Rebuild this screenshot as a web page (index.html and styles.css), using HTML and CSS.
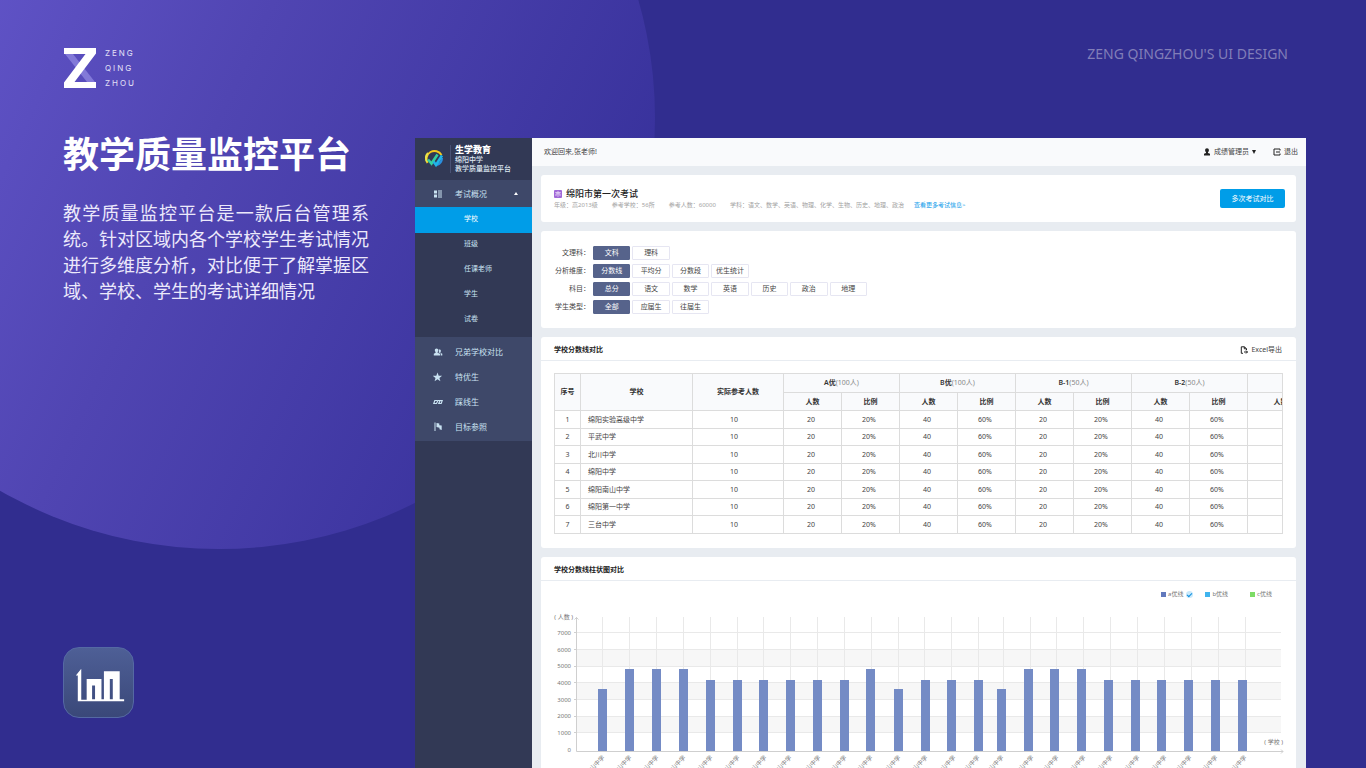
FILE: index.html
```html
<!DOCTYPE html>
<html lang="zh-CN">
<head>
<meta charset="utf-8">
<meta name="viewport" content="width=device-width, initial-scale=1">
<title>教学质量监控平台</title>
<link rel="stylesheet" href="styles.css">
</head>
<body>
<div class="stage">
  <section class="intro">
    <div class="brand">
      <svg class="brand-mark" viewBox="0 0 33 40" aria-hidden="true">
        <path fill="#8279d8" d="M2 6h8l22 28h-8z"/>
        <path fill="#fff" d="M1 0h32v5.500L11.500 34H33v6H1v-5.500L22.500 6H1z"/>
      </svg>
      <div class="brand-name"><span>ZENG</span><span>QING</span><span>ZHOU</span></div>
    </div>
    <h1 class="intro-title">教学质量监控平台</h1>
    <p class="intro-text">教学质量监控平台是一款后台管理系统。针对区域内各个学校学生考试情况进行多维度分析，对比便于了解掌握区域、学校、学生的考试详细情况</p>
    <div class="app-icon">
      <svg viewBox="0 0 70 70" aria-hidden="true">
        <path fill="#fff" fill-rule="evenodd" d="M12 28l5.500-7v31.500H23V31.500h15V52h2.500V23.500h16V52H61v2H14V28zM28.500 38v14h3V38zM46.500 31.500V52h3V31.500z"/>
      </svg>
    </div>
  </section>

  <div class="showcase">
    <p class="credit">ZENG QINGZHOU'S UI DESIGN</p>
    <div class="app">
      <aside class="sidebar">
        <div class="logo">
          <svg class="logo-mark" viewBox="0 0 22 22" aria-hidden="true">
            <path d="M4.500 16A8 8 0 1 1 18.500 8" fill="none" stroke="#f5c81e" stroke-width="2"/>
            <path d="M4 15A8 8 0 0 1 5 6" fill="none" stroke="#e8e34a" stroke-width="2"/>
            <path d="M19 11a8 8 0 0 1-5 7" fill="none" stroke="#2a8fe0" stroke-width="2.200"/>
            <path d="M5 12.500l3.500 4 6-9" fill="none" stroke="#35d0a0" stroke-width="2.600"/>
            <path d="M10.500 14.500l2.500 3.500 6-9.500" fill="none" stroke="#1fb4e8" stroke-width="2.600"/>
          </svg>
          <div class="logo-text">
            <strong>生学教育</strong>
            <span>绵阳中学</span>
            <span>教学质量监控平台</span>
          </div>
        </div>
        <nav class="menu" aria-label="主菜单">
          <a class="menu-item menu-open" href="#">
            <svg viewBox="0 0 10 10" aria-hidden="true"><path fill="currentColor" d="M1 1.500h3v3H1zM1 5.500h3v3H1zM5 1.500h4v1H5zM5 3.500h4v1H5zM5 5.500h4v1H5zM5 7.500h4v1H5z"/></svg>
            <span>考试概况</span><i class="caret-up"></i>
          </a>
          <div class="submenu">
            <a class="submenu-item is-active" href="#">学校</a>
            <a class="submenu-item" href="#">班级</a>
            <a class="submenu-item" href="#">任课老师</a>
            <a class="submenu-item" href="#">学生</a>
            <a class="submenu-item" href="#">试卷</a>
          </div>
          <div class="menu-group">
            <a class="menu-item" href="#">
              <svg viewBox="0 0 10 10" aria-hidden="true"><path fill="currentColor" d="M3.500 1.500c1.200 0 1.800.8 1.800 1.800 0 .8-.3 1.300-.7 1.700v.7L7 6.700v1.800H.8V6.700l1.800-1V5c-.5-.4-.8-.9-.8-1.700 0-1 .6-1.800 1.700-1.800zM6.500 2.500c.9 0 1.400.6 1.400 1.400 0 .6-.2 1-.6 1.300v.6l2 .9v1.800H7.700V6.300L5.600 5.400c.2-.5.4-1 .3-1.700 0-.6-.1-.9-.3-1 .2-.1.500-.2.9-.2z"/></svg>
              <span>兄弟学校对比</span>
            </a>
            <a class="menu-item" href="#">
              <svg viewBox="0 0 10 10" aria-hidden="true"><path fill="currentColor" d="M4.500 .5l1.200 3.200 3.400.1-2.700 2.100 1 3.300-2.900-1.900-2.900 1.900.9-3.300L-.1 3.800l3.400-.1z"/></svg>
              <span>特优生</span>
            </a>
            <a class="menu-item" href="#">
              <svg viewBox="0 0 10 10" aria-hidden="true"><path fill="none" stroke="currentColor" stroke-width="1.200" d="M4.200 3.500H1.800L.8 6.500h2.700l1.400-3h2.200L5.800 6.500h2.400l1-3H6.600"/></svg>
              <span>踩线生</span>
            </a>
            <a class="menu-item" href="#">
              <svg viewBox="0 0 10 10" aria-hidden="true"><path fill="currentColor" d="M1.500 .5h1v8.500h-1zM3.500 1l2.800.6v1.600L8.700 3.500v4.500L6.500 7.200V5.700l-3-.6z"/></svg>
              <span>目标参照</span>
            </a>
          </div>
        </nav>
      </aside>

      <div class="main">
        <header class="topbar">
          <span>欢迎回来,张老师!</span>
          <div class="topbar-actions">
            <button class="plain" type="button">
              <svg viewBox="0 0 8 8" aria-hidden="true"><path fill="currentColor" d="M4 .3c1.300 0 1.900.8 1.900 1.900S5.300 4 5 4.300v.8l2 .7v1.700H1V5.800l2-.7v-.8C2.700 4 2.100 3.300 2.100 2.200S2.700.3 4 .3z"/></svg>
              <span>成绩管理员</span><i class="caret-down"></i>
            </button>
            <button class="plain" type="button">
              <svg viewBox="0 0 8 8" aria-hidden="true"><path fill="none" stroke="currentColor" d="M7 2.500V1H1v6h6V5.500M3 4h4"/></svg>
              <span>退出</span>
            </button>
          </div>
        </header>

        <main class="content">
          <section class="card exam">
            <div class="exam-info">
              <h2 class="exam-title">
                <svg viewBox="0 0 8 8" aria-hidden="true"><rect width="8" height="8" rx="1" fill="#a169d8"/><path fill="none" stroke="#ead9f8" stroke-width=".8" d="M4 1v1.200M1.300 2.500h5.400M2 6V3.800h4V6M4 2.500v4.300"/></svg>
                绵阳市第一次考试
              </h2>
              <p class="exam-meta">
                <span>年级<b class="colon">：</b>高2013级</span><span>参考学校<b class="colon">：</b>56所</span><span>参考人数<b class="colon">：</b>60000</span><span>学科<b class="colon">：</b>语文、数学、英语、物理、化学、生物、历史、地理、政治</span><a href="#">查看更多考试信息&gt;</a>
              </p>
            </div>
            <button class="primary" type="button">多次考试对比</button>
          </section>

          <section class="card filters">
            <div class="filter"><span class="filter-label">文理科<b class="colon">：</b></span><div class="chips"><button type="button" class="chip on">文科</button><button type="button" class="chip">理科</button></div></div>
            <div class="filter"><span class="filter-label">分析维度<b class="colon">：</b></span><div class="chips"><button type="button" class="chip on">分数线</button><button type="button" class="chip">平均分</button><button type="button" class="chip">分数段</button><button type="button" class="chip">优生统计</button></div></div>
            <div class="filter"><span class="filter-label">科目<b class="colon">：</b></span><div class="chips"><button type="button" class="chip on">总分</button><button type="button" class="chip">语文</button><button type="button" class="chip">数学</button><button type="button" class="chip">英语</button><button type="button" class="chip">历史</button><button type="button" class="chip">政治</button><button type="button" class="chip">地理</button></div></div>
            <div class="filter"><span class="filter-label">学生类型<b class="colon">：</b></span><div class="chips"><button type="button" class="chip on">全部</button><button type="button" class="chip">应届生</button><button type="button" class="chip">往届生</button></div></div>
          </section>

          <section class="card">
            <div class="card-head">
              <h3>学校分数线对比</h3>
              <button class="plain" type="button">
                <svg viewBox="0 0 8 8" aria-hidden="true"><path fill="none" stroke="currentColor" d="M3 7.300H1.300V.8H4.500L6.500 2.800V4M4.300.8v2h2M4 6h3.500M6 4.500L7.500 6 6 7.500"/></svg>
                <span>Excel导出</span>
              </button>
            </div>
            <div class="table-wrap">
              <table class="scores">
                <colgroup><col class="c-no"><col class="c-school"><col class="c-total"><col span="8" class="c-num"><col class="c-last"></colgroup>
                <thead>
                  <tr class="r-top"><th rowspan="2">序号</th><th rowspan="2">学校</th><th rowspan="2">实际参考人数</th><th colspan="2">A优<small>(100人)</small></th><th colspan="2">B优<small>(100人)</small></th><th colspan="2">B-1<small>(50人)</small></th><th colspan="2">B-2<small>(50人)</small></th><th></th></tr>
                  <tr class="r-sub"><th>人数</th><th>比例</th><th>人数</th><th>比例</th><th>人数</th><th>比例</th><th>人数</th><th>比例</th><th>人数</th></tr>
                </thead>
                <tbody>
                  <tr><td>1</td><td>绵阳实验高级中学</td><td>10</td><td>20</td><td>20%</td><td>40</td><td>60%</td><td>20</td><td>20%</td><td>40</td><td>60%</td><td></td></tr>
                  <tr><td>2</td><td>平武中学</td><td>10</td><td>20</td><td>20%</td><td>40</td><td>60%</td><td>20</td><td>20%</td><td>40</td><td>60%</td><td></td></tr>
                  <tr><td>3</td><td>北川中学</td><td>10</td><td>20</td><td>20%</td><td>40</td><td>60%</td><td>20</td><td>20%</td><td>40</td><td>60%</td><td></td></tr>
                  <tr><td>4</td><td>绵阳中学</td><td>10</td><td>20</td><td>20%</td><td>40</td><td>60%</td><td>20</td><td>20%</td><td>40</td><td>60%</td><td></td></tr>
                  <tr><td>5</td><td>绵阳南山中学</td><td>10</td><td>20</td><td>20%</td><td>40</td><td>60%</td><td>20</td><td>20%</td><td>40</td><td>60%</td><td></td></tr>
                  <tr><td>6</td><td>绵阳第一中学</td><td>10</td><td>20</td><td>20%</td><td>40</td><td>60%</td><td>20</td><td>20%</td><td>40</td><td>60%</td><td></td></tr>
                  <tr><td>7</td><td>三台中学</td><td>10</td><td>20</td><td>20%</td><td>40</td><td>60%</td><td>20</td><td>20%</td><td>40</td><td>60%</td><td></td></tr>
                </tbody>
              </table>
            </div>
          </section>

          <section class="card">
            <div class="card-head"><h3>学校分数线柱状图对比</h3></div>
            <div class="legend">
              <label><i class="swatch a"></i>a优线<input type="checkbox" checked></label>
              <label><i class="swatch b"></i>b优线<input type="checkbox"></label>
              <label><i class="swatch c"></i>c优线<input type="checkbox"></label>
            </div>
            <svg class="chart" viewBox="0 0 755 190" role="img" aria-label="学校分数线柱状图">
              <path class="band" d="M36 43.500h704v17H36zM36 76.500h704v17H36zM36 110.500h704v16H36z"/>
              <path class="grid" d="M36 26.500h704M36 43.500h704M36 60.500h704M36 76.500h704M36 93.500h704M36 110.500h704M36 126.500h704"/>
              <path class="grid" d="M61.500 11v134M88.500 11v134M115.500 11v134M142.500 11v134M169.500 11v134M196.500 11v134M222.500 11v134M249.500 11v134M276.500 11v134M303.500 11v134M330.500 11v134M357.500 11v134M383.500 11v134M410.500 11v134M437.500 11v134M462.500 11v134M489.500 11v134M515.500 11v134M542.500 11v134M569.500 11v134M596.500 11v134M623.500 11v134M650.500 11v134M677.500 11v134M704.500 11v134"/>
              <path class="axis" d="M35.500 11v134.500H742M33.500 13.500l2-2 2 2M740 143.500l2 2-2 2M33 26.500h2M33 43.500h2M33 60.500h2M33 76.500h2M33 93.500h2M33 110.500h2M33 126.500h2"/>
              <path class="bars" d="M57 145v-62h9v62zM84 145v-82h9v82zM111 145v-82h9v82zM138 145v-82h9v82zM165 145v-71h9v71zM192 145v-71h9v71zM218 145v-71h9v71zM245 145v-71h9v71zM272 145v-71h9v71zM299 145v-71h9v71zM325 145v-82h9v82zM353 145v-62h9v62zM380 145v-71h9v71zM406 145v-71h9v71zM433 145v-71h9v71zM456 145v-62h9v62zM483 145v-82h9v82zM509 145v-82h9v82zM536 145v-82h9v82zM563 145v-71h9v71zM590 145v-71h9v71zM616 145v-71h9v71zM643 145v-71h9v71zM670 145v-71h9v71zM697 145v-71h9v71z"/>
              <g class="tick">
                <text x="32" y="13">( 人数 )</text>
                <text x="30" y="29">7000</text><text x="30" y="46">6000</text><text x="30" y="62">5000</text><text x="30" y="79">4000</text><text x="30" y="96">3000</text><text x="30" y="112">2000</text><text x="30" y="129">1000</text><text x="30" y="146">0</text>
                <text x="742" y="138">( 学校 )</text>
                <text transform="translate(64 152) rotate(-45)">绵阳南山中学</text>
                <text transform="translate(91 152) rotate(-45)">绵阳南山中学</text>
                <text transform="translate(118 152) rotate(-45)">绵阳南山中学</text>
                <text transform="translate(145 152) rotate(-45)">绵阳南山中学</text>
                <text transform="translate(172 152) rotate(-45)">绵阳南山中学</text>
                <text transform="translate(199 152) rotate(-45)">绵阳南山中学</text>
                <text transform="translate(226 152) rotate(-45)">绵阳南山中学</text>
                <text transform="translate(251 152) rotate(-45)">绵阳南山中学</text>
                <text transform="translate(280 152) rotate(-45)">绵阳南山中学</text>
                <text transform="translate(306 152) rotate(-45)">绵阳南山中学</text>
                <text transform="translate(332 152) rotate(-45)">绵阳南山中学</text>
                <text transform="translate(360 152) rotate(-45)">绵阳南山中学</text>
                <text transform="translate(387 152) rotate(-45)">绵阳南山中学</text>
                <text transform="translate(415 152) rotate(-45)">绵阳南山中学</text>
                <text transform="translate(439 152) rotate(-45)">绵阳南山中学</text>
                <text transform="translate(463 152) rotate(-45)">绵阳南山中学</text>
                <text transform="translate(493 152) rotate(-45)">绵阳南山中学</text>
                <text transform="translate(518 152) rotate(-45)">绵阳南山中学</text>
                <text transform="translate(545 152) rotate(-45)">绵阳南山中学</text>
                <text transform="translate(572 152) rotate(-45)">绵阳南山中学</text>
                <text transform="translate(599 152) rotate(-45)">绵阳南山中学</text>
                <text transform="translate(626 152) rotate(-45)">绵阳南山中学</text>
                <text transform="translate(651 152) rotate(-45)">绵阳南山中学</text>
                <text transform="translate(677 152) rotate(-45)">绵阳南山中学</text>
                <text transform="translate(706 152) rotate(-45)">绵阳南山中学</text>
              </g>
            </svg>
          </section>
        </main>
      </div>
    </div>
  </div>
</div>
</body>
</html>
```
FILE: styles.css
```css
* { box-sizing: border-box; }

body {
  margin: 0;
  font-family: "Noto Sans", "Noto Sans CJK SC", sans-serif;
  font-size: 7px;
  line-height: 10px;
  color: #444;
}

h1, h2, h3, p { margin: 0; }
a { color: inherit; text-decoration: none; }
button { font: inherit; color: inherit; padding: 0; border: 0; background: none; cursor: pointer; }
svg { display: block; flex: none; }

.stage {
  position: relative;
  display: grid;
  grid-template-columns: 415px minmax(0, 1fr);
  grid-template-rows: 100vh;
  height: 100vh;
  padding-right: 60px;
  overflow: hidden;
  background: #312d8f;
}

/* large gradient disc behind the headline */
.stage::before {
  content: "";
  position: absolute;
  left: -217px;
  top: -313px;
  width: 872px;
  height: 862px;
  border-radius: 50%;
  background: linear-gradient(115deg, #6457cc 20%, #5045b2 50%, #36309a 90%);
}

.intro, .showcase { position: relative; }

.intro {
  display: flex;
  flex-direction: column;
  padding: 48px 46px 50px 63px;
  color: #fff;
}

.brand { display: flex; gap: 9px; height: 40px; }
.brand-mark { width: 33px; height: 40px; }
.brand-name {
  display: flex;
  flex-direction: column;
  justify-content: space-between;
  font-family: Inter, sans-serif;
  font-size: 8px;
  letter-spacing: 2px;
  color: #e4e1f7;
}

.intro-title { margin-top: 38px; font-size: 36px; line-height: 52px; font-weight: 700; white-space: nowrap; font-family: "Noto Sans CJK SC", sans-serif; }
.intro-text {
  margin-top: 21px;
  font-family: "Noto Sans CJK SC", sans-serif;
  font-size: 18px;
  line-height: 26px;
  text-align: justify;
  color: #ece9fb;
}

.app-icon {
  width: 71px;
  height: 71px;
  margin-top: auto;
  border: 1px solid #5569a3;
  border-radius: 16px;
  background: linear-gradient(#4e5f96, #3a4879);
}

.credit {
  height: 138px;
  padding: 44px 18px 0 0;
  font-size: 14px;
  line-height: 20px;
  text-align: right;
  color: #817eb8;
}

.app { display: flex; min-height: 700px; background: #e8ecf1; }

.sidebar { flex: 0 0 117px; background: #323955; color: #c9e2f2; }
.logo { display: flex; gap: 5px; height: 42px; padding: 7px 0 0 8px; color: #dfe8f2; }
.logo-mark { width: 22px; height: 22px; margin-top: 2px; }
.logo-text { display: flex; flex-direction: column; padding-left: 4px; height: 28px; line-height: 9px; font-weight: 500; border-left: 1px solid #4a5275; }
.logo-text strong { font-size: 9px; line-height: 10px; font-weight: 900; color: #fff; }

.menu-item { display: flex; align-items: center; height: 25px; padding-left: 18px; font-size: 8px; gap: 12px; }
.menu-item svg { width: 10px; height: 10px; }
.menu-open { height: 27px; background: #3e4869; padding-right: 14px; }
.caret-up { margin-left: auto; border: 2px solid transparent; border-top: 0; border-bottom: 3px solid #fff; }
.submenu { padding-bottom: 4px; }
.submenu-item { display: block; height: 25px; padding-left: 49px; line-height: 21px; }
.submenu-item.is-active { height: 26px; line-height: 24px; background: #009de8; color: #fff; }
.menu-group { padding: 2px 0; background: #3e4869; }

.main { flex: 1; min-width: 0; }
.topbar { display: flex; justify-content: space-between; align-items: center; height: 28px; padding: 0 8px 0 12px; background: #f9fafc; }
.topbar-actions { display: flex; gap: 17px; }
.plain { display: flex; align-items: center; gap: 3px; }
.plain svg { width: 8px; height: 8px; color: #222; }
.caret-down { border: 2px solid transparent; border-bottom: 0; border-top: 4px solid #222; }

.content { display: flex; flex-direction: column; gap: 9px; padding: 9px 10px 9px 9px; }
.card { background: #fff; border-radius: 3px; }

/* full-width colon with its dots in the middle of the box */
.colon { font-family: "Noto Sans CJK TC", sans-serif; font-weight: 400; }

.exam { display: flex; align-items: center; justify-content: space-between; height: 47px; padding: 0 11px 0 13px; }
.exam-title { display: flex; align-items: center; gap: 4px; font-size: 9px; line-height: 13px; font-weight: 500; color: #222; }
.exam-title svg { width: 8px; height: 8px; }
.exam-meta { display: flex; gap: 14px; font-size: 6px; color: #a3a3a3; white-space: nowrap; }
.exam-meta a { margin-left: -4px; color: #0d9bea; }
.primary { width: 65px; height: 19px; border-radius: 2px; background: #009de8; color: #fff; }

.filters { display: flex; flex-direction: column; gap: 4px; padding: 15px 0 14px 10px; }
.filter { display: flex; gap: 3px; }
.filter-label { width: 39px; height: 14px; line-height: 12px; text-align: right; white-space: nowrap; }
.chips { display: grid; grid-template-columns: repeat(7, 1fr); gap: 2px; width: 274px; }
.chip { height: 14px; line-height: 12px; border: 1px solid #e6e6f2; border-radius: 1px; background: #fff; }
.chip.on { border-color: #56638b; background: #56638b; color: #fff; }

.card-head { display: flex; justify-content: space-between; align-items: center; height: 24px; padding: 2px 14px 0 13px; border-bottom: 1px solid #e8ecf1; }
.card-head h3 { font-size: 7px; font-weight: 600; color: #222; }

.table-wrap { margin: 12px 13px 14px; overflow: hidden; border-right: 1px solid #dcdcdc; }
.scores { width: calc(100% + 30px); table-layout: fixed; border-collapse: collapse; }
.scores tr { height: 18px; }
.scores .r-top { height: 19px; }
.scores tr:nth-child(even) { height: 17px; }
.scores .r-sub:nth-child(even) { height: 18px; }
.scores th, .scores td { padding: 0 3px 0 0; border: 1px solid #dcdcdc; text-align: center; line-height: 10px; }
.scores th { padding: 0; background: #f9fafc; font-weight: 600; color: #333; }
.scores small { font-size: 7px; font-weight: 400; color: #888; }
.scores td:nth-child(1) { padding: 0; }
.scores td:nth-child(2) { padding: 0 0 0 7px; text-align: left; }
.scores td:nth-child(3) { padding: 0 8px 0 0; }
.c-no { width: 26px; }
.c-school { width: 112px; }
.c-total { width: 91px; }
.c-num { width: 58px; }
.c-last { width: 66px; }

.legend { display: flex; justify-content: flex-end; align-items: center; gap: 12px; height: 25px; padding: 1px 14px 0 0; font-size: 6px; color: #777; }
.legend label { display: flex; align-items: center; gap: 2px; }
.swatch { width: 5px; height: 5px; }
.swatch.a { background: #6279bd; }
.swatch.b { background: #40b4ee; }
.swatch.c { background: #7ddc66; }
.legend input { appearance: none; width: 7px; height: 7px; margin: 0 0 0 1px; border-radius: 50%; }
.legend input:checked { display: grid; place-items: center; background: #c9e9fb; }
.legend input:checked::before { content: ""; width: 4px; height: 2px; border: solid #0d8fe0; border-width: 0 0 1px 1px; transform: rotate(-45deg); }

.chart { width: 100%; height: auto; overflow: visible; }
.band { fill: #f7f7f7; }
.grid { fill: none; stroke: #e9e9e9; }
.axis { fill: none; stroke: #cfcfcf; }
.bars { fill: #748bc5; }
.tick { font-size: 6px; fill: #777; text-anchor: end; }
```
